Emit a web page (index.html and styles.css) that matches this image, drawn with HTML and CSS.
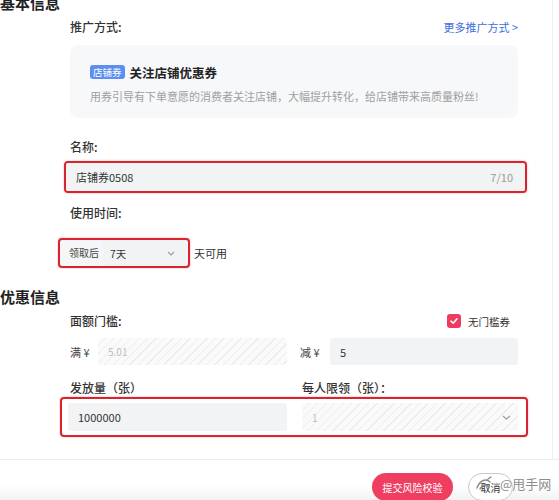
FILE: index.html
```html
<!DOCTYPE html>
<html lang="zh-CN">
<head>
    <meta charset="UTF-8">
    <meta name="viewport" content="width=device-width, initial-scale=1.0">
    <title>店铺券</title>
    <link rel="stylesheet" href="styles.css">
</head>
<body>
    <div class="page">
        <h2 class="block-title">基本信息</h2>

        <div class="field">
            <div class="field-head">
                <span class="label">推广方式:</span>
                <a class="more-link">更多推广方式 &gt;</a>
            </div>
            <div class="promo-card">
                <div class="promo-title">
                    <span class="tag">店铺券</span>
                    <span class="promo-name">关注店铺优惠券</span>
                </div>
                <p class="promo-desc">用券引导有下单意愿的消费者关注店铺，大幅提升转化，给店铺带来高质量粉丝!</p>
            </div>
        </div>

        <div class="field field-name">
            <div class="label">名称:</div>
            <div class="mark mark-name">
                <div class="input input-name">
                    <span>店铺券0508</span>
                    <span class="count">7/10</span>
                </div>
            </div>
        </div>

        <div class="field field-time">
            <div class="label">使用时间:</div>
            <div class="time-row">
                <div class="mark mark-time">
                    <span class="addon">领取后</span>
                    <div class="select">
                        <span>7天</span>
                        <!-- chevron -->
                        <svg width="8" height="5" viewBox="0 0 8 5"><polyline points="1,1 4,4 7,1" fill="none" stroke="#9a9a9a" stroke-width="1.1"/></svg>
                    </div>
                </div>
                <span class="suffix">天可用</span>
            </div>
        </div>

        <h2 class="block-title title-discount">优惠信息</h2>

        <div class="field field-threshold">
            <div class="field-head">
                <span class="label">面额门槛:</span>
                <label class="check">
                    <span class="check-box">
                        <svg width="10" height="10" viewBox="0 0 10 10"><polyline points="2,5.2 4.2,7.2 8,2.8" fill="none" stroke="#fff" stroke-width="1.6" stroke-linecap="round" stroke-linejoin="round"/></svg>
                    </span>
                    无门槛券
                </label>
            </div>
            <div class="money-row">
                <div class="money">
                    <span class="money-label">满 ¥</span>
                    <div class="input hatched"><span class="placeholder">5.01</span></div>
                </div>
                <div class="money">
                    <span class="money-label">减 ¥</span>
                    <div class="input"><span>5</span></div>
                </div>
            </div>
        </div>

        <div class="field field-amount">
            <div class="amount-labels">
                <span class="label">发放量（张）</span>
                <span class="label">每人限领（张）：</span>
            </div>
        </div>
        <div class="mark mark-amount">
            <div class="input"><span>1000000</span></div>
            <div class="input hatched select-input">
                <span class="placeholder">1</span>
                <svg width="9" height="5" viewBox="0 0 9 5"><polyline points="1,1 4.5,4 8,1" fill="none" stroke="#a0a0a0" stroke-width="1.2"/></svg>
            </div>
        </div>
    </div>

    <footer class="footer">
        <button class="btn-submit">提交风险校验</button>
        <button class="btn-cancel">取消</button>
        <!-- watermark over the cancel button -->
        <div class="watermark">
            <svg width="22" height="16" viewBox="0 0 22 16"><path d="M3 12 C6 4, 12 2, 16 6 M6 13 C9 8, 13 8, 15 11 M14 3 l3 -2" fill="none" stroke="#8a8a8a" stroke-width="1.4" stroke-linecap="round"/></svg>
            <span>@甩手网</span>
        </div>
    </footer>
</body>
</html>
```

FILE: styles.css
```css
* { margin: 0; padding: 0; box-sizing: border-box; }
body { font-family: "Noto Sans CJK SC", "Noto Sans", sans-serif; background: #fff; color: #333; width: 559px; height: 500px; overflow: hidden; }
.page { margin-top: -8px; width: 553px; height: 467px; border-right: 1px solid #f0f0f0; }

.block-title { font-size: 15px; line-height: 22px; font-weight: 700; color: #222; }
.title-discount { margin-top: 18px; }

.field { margin-left: 70px; width: 448px; }
.field-head { display: flex; justify-content: space-between; align-items: center; margin-top: 4px; }
.label { font-size: 12px; line-height: 18px; font-weight: 500; color: #333; }
.more-link { font-size: 11px; color: #3d6fd9; line-height: 18px; }

.promo-card { margin-top: 9px; height: 73px; background: #f7f8fa; border-radius: 8px; padding: 18px 20px 0; }
.promo-title { display: flex; align-items: center; height: 18px; }
.tag { font-size: 9.5px; line-height: 14px; padding: 0 3px; background: #5d8ff0; color: #fff; border-radius: 3px; }
.promo-name { margin-left: 5px; font-size: 12.5px; font-weight: 700; color: #222; }
.promo-desc { margin-top: 6px; font-size: 11px; line-height: 18px; color: #a0a0a0; }

/* red annotation boxes */
.mark { border: 2px solid #d9232d; border-radius: 4px; box-shadow: 0 0 2px rgba(217,35,45,0.4); }

.input { display: flex; align-items: center; justify-content: space-between; height: 28px; padding: 0 10px; background: #f2f3f5; border-radius: 3px; font-size: 11px; color: #333; }
.hatched { background: repeating-linear-gradient(135deg, #fafafa 0, #fafafa 5px, #ececec 5px, #ececec 6px); }
.placeholder { color: #bdbdbd; font-size: 10px; }

.field-name { margin-top: 20px; }
.mark-name { margin: 5px -9px 0 -6px; }
.count { color: #9a9a9a; margin-right: 2px; }

.field-time { margin-top: 11px; }
.time-row { display: flex; align-items: center; margin: 16px 0 0 -12px; }
.mark-time { display: flex; width: 132px; height: 30px; background: #f5f6f7; }
.addon { width: 43px; line-height: 26px; font-size: 10px; color: #444; padding-left: 9px; }
.select { flex: 1; display: flex; align-items: center; justify-content: space-between; padding: 0 11px 0 7px; background: #f2f3f5; font-size: 10.5px; color: #333; margin-right: 2px; }
.suffix { margin-left: 4px; font-size: 11px; color: #333; }

.check { display: flex; align-items: center; margin-right: 8px; font-size: 10.5px; color: #333; }
.check-box { display: flex; align-items: center; justify-content: center; width: 14px; height: 14px; background: #f03b60; border-radius: 3px; margin-right: 7px; }

.money-row { display: grid; grid-template-columns: 217px 218px; column-gap: 13px; margin-top: 8px; }
.money { display: flex; align-items: center; }
.money-label { width: 28px; font-size: 11px; color: #444; }
.money .input { flex: 1; height: 27px; }
.money:last-child .money-label { width: 30px; }

.field-amount { margin-top: 14px; }
.amount-labels { display: grid; grid-template-columns: 232px 1fr; }
.mark-amount { display: grid; grid-template-columns: 219px 216px; column-gap: 15px; margin-left: 60px; width: 468px; padding: 4px 8px 4px 6px; }
.select-input { padding-right: 7px; }

.footer { position: relative; display: flex; justify-content: flex-end; align-items: flex-start; height: 41px; border-top: 1px solid #ececec; padding: 13px 46px 0 0; background: linear-gradient(#fff 60%, #f3f3f3); }
.footer button { height: 28px; border-radius: 14px; font-family: inherit; font-size: 10px; cursor: pointer; }
.btn-submit { width: 81px; border: none; background: #ef3e5f; color: #fff; }
.btn-cancel { width: 45px; margin-left: 15px; border: 1px solid #c8c8c8; background: #fff; color: #333; }
.watermark { position: absolute; left: 474px; top: 14px; display: flex; align-items: center; gap: 4px; font-size: 13px; color: #8c8c8c; text-shadow: 0 0 2px #fff, 0 0 2px #fff; }
```
